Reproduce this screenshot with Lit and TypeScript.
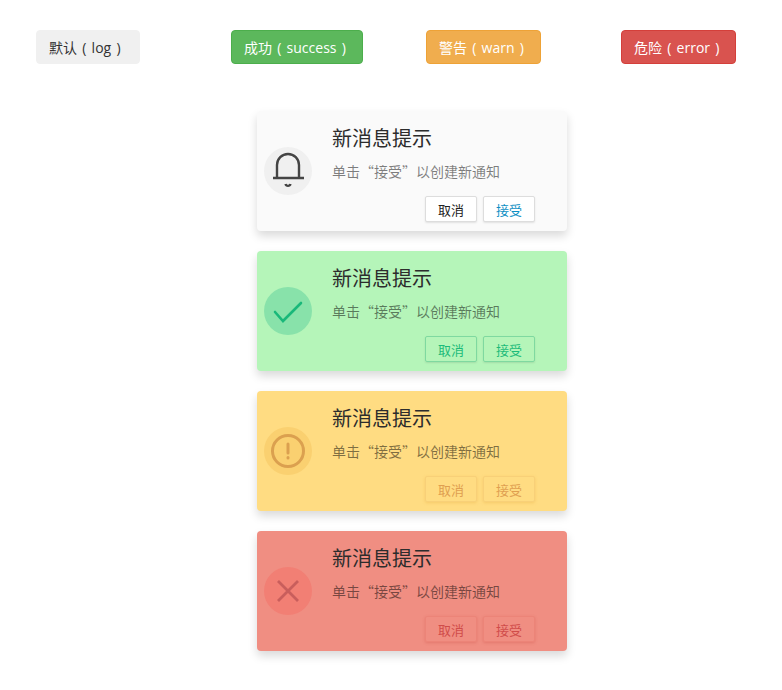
import { LitElement, html, css, svg } from "lit";
import { customElement } from "lit/decorators.js";

type Kind = "log" | "success" | "warn" | "error";

const icons: Record<Kind, unknown> = {
  log: svg`<path class="g" d="M13 31V18a11 11 0 0 1 22 0V31" /><path class="g" d="M9 31H40" /><path class="g" d="M21.5 37a2.6 2.6 0 0 0 5 0" />`,
  success: svg`<path class="g" d="M11 25L19 34L37 16" />`,
  warn: svg`<circle class="g" cx="24" cy="24" r="15.5" /><path class="g" d="M24 17V26" /><path class="g" d="M24 30.5V31" />`,
  error: svg`<path class="g" d="M14 14L34 34M34 14L14 34" />`,
};

const triggers: { kind: Kind; label: string }[] = [
  { kind: "log", label: "默认 ( log )" },
  { kind: "success", label: "成功 ( success )" },
  { kind: "warn", label: "警告 ( warn )" },
  { kind: "error", label: "危险 ( error )" },
];

@customElement("app-root")
export class AppRoot extends LitElement {
  static styles = css`
    :host {
      display: block;
      font-family: "Noto Sans CJK SC", sans-serif;
      background: #fff;
      min-height: 690px;
    }
    .triggers {
      display: grid;
      grid-template-columns: repeat(4, 159px);
      column-gap: 36px;
      justify-items: start;
      padding: 30px 0 0 36px;
      font-family: "Open Sans", "Noto Sans CJK SC", sans-serif;
    }
    .trigger {
      box-sizing: border-box;
      height: 34px;
      padding: 0 12px;
      border: 1px solid transparent;
      border-radius: 4px;
      display: flex;
      align-items: center;
      font-size: 14px;
      white-space: pre;
      word-spacing: 1.6px;
    }
    .trigger.log { background: #f0f0f0; color: #333; min-width: 104px; border-color: #f0f0f0; }
    .trigger.success { background: #5cb85c; color: #fff; min-width: 132px; border-color: #4cae4c; }
    .trigger.warn { background: #f0ad4e; color: #fff; min-width: 115px; border-color: #eea236; }
    .trigger.error { background: #d9534f; color: #fff; min-width: 115px; border-color: #d43f3a; }
    .stack {
      display: flex;
      flex-direction: column;
      gap: 20px;
      width: 310px;
      margin: 47px 0 0 257px;
    }
    .card {
      box-sizing: border-box;
      height: 120px;
      border-radius: 4px;
      display: flex;
      align-items: center;
      gap: 20px;
      padding: 0 32px 0 7px;
      box-shadow: 0 5px 10px rgba(0, 0, 0, 0.15);
      color: #333;
    }
    .card.log { background: #fafafa; }
    .card.success { background: #b5f5b9; }
    .card.warn { background: #ffdc82; }
    .card.error { background: #f08e82; }
    .icon {
      width: 48px;
      height: 48px;
      border-radius: 50%;
      flex: none;
      display: block;
    }
    .g { fill: none; stroke-linecap: round; stroke-width: 2.4; }
    .log .icon { background: #f0f0f0; }
    .log .g { stroke: #444; stroke-linecap: butt; }
    .success .icon { background: #88e2aa; }
    .success .g { stroke: #19b87a; stroke-width: 2.6; }
    .warn .icon { background: #fad070; }
    .warn .g { stroke: #dba04f; stroke-width: 3; }
    .error .icon { background: #f27f74; }
    .error .g { stroke: #c95e5c; stroke-linecap: butt; stroke-width: 2.8; }
    .body {
      flex: 1;
      min-width: 0;
      height: 120px;
      display: flex;
      flex-direction: column;
    }
    .title {
      font-size: 20px;
      line-height: 28px;
      margin-top: 13px;
      color: #2c2c2c;
    }
    .desc {
      font-size: 14px;
      line-height: 20px;
      margin-top: 9px;
      color: rgba(0, 0, 0, 0.5);
    }
    .actions {
      display: flex;
      justify-content: flex-end;
      gap: 6px;
      margin-top: 15px;
    }
    .btn {
      box-sizing: border-box;
      width: 52px;
      height: 26px;
      border-radius: 2px;
      border: 1px solid #ddd;
      background: #fff;
      font: inherit;
      font-size: 13px;
      padding: 0;
      box-shadow: 0 1px 2px rgba(0, 0, 0, 0.1);
      color: #222;
    }
    .btn.ok { color: #0e8fc4; }
    .success .btn { background: transparent; border-color: #7fd9a0; color: #1cbb7a; }
    .warn .btn { background: transparent; border-color: #f8d078; color: #e09f50; box-shadow: 0 1px 3px rgba(230, 170, 60, 0.35); }
    .error .btn { background: transparent; border-color: #ec8478; color: #d04c4a; box-shadow: 0 1px 3px rgba(200, 70, 60, 0.3); }
  `;

  private card(kind: Kind) {
    return html`<div class="card ${kind}">
      <svg class="icon" viewBox="0 0 48 48">${icons[kind]}</svg>
      <div class="body">
        <div class="title">新消息提示</div>
        <div class="desc">单击“接受”以创建新通知</div>
        <div class="actions">
          <button class="btn">取消</button>
          <button class="btn ok">接受</button>
        </div>
      </div>
    </div>`;
  }

  render() {
    return html`
      <div class="triggers">
        ${triggers.map((t) => html`<div class="trigger ${t.kind}">${t.label}</div>`)}
      </div>
      <div class="stack">
        ${(["log", "success", "warn", "error"] as Kind[]).map((k) => this.card(k))}
      </div>
    `;
  }
}
